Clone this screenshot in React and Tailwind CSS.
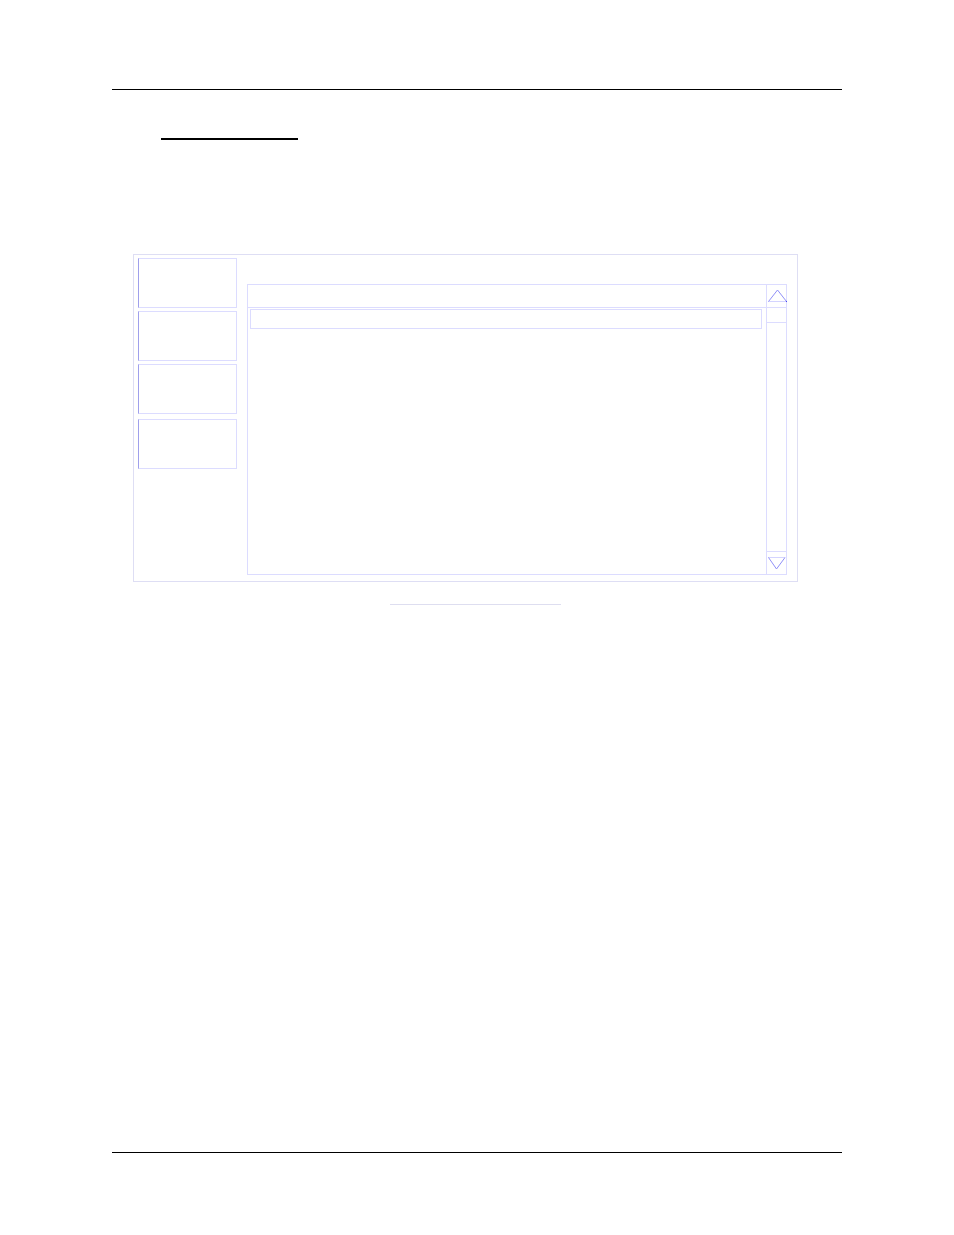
import React from "react";

const actions = ["first", "second", "third", "fourth"];

function ScrollArrow({ direction }) {
  const up = direction === "up";

  return (
    <button
      type="button"
      aria-label={up ? "Scroll up" : "Scroll down"}
      className={`block h-[23px] w-full border-[#dcdcff] ${
        up ? "border-b" : "border-t"
      }`}
    >
      <svg
        viewBox="0 0 19 22"
        fill="none"
        className="block h-[22px] w-[19px] overflow-visible"
      >
        <path
          d={up ? "M1 16.5H19" : "M1 5.5H18"}
          stroke="#d4d4ff"
        />
        <path
          d={up ? "M1.5 16.5L10.5 5L19.5 16.5" : "M1.5 5.5L9.5 17L18 5.5"}
          stroke="#9090f8"
        />
        {up && <path d="M19 16.5H20" stroke="#4646f0" />}
      </svg>
    </button>
  );
}

function ActionColumn() {
  return (
    <div className="grid w-[99px] shrink-0 grid-rows-[53px_53px_55px_50px] content-start">
      {actions.map((action) => (
        <button
          key={action}
          type="button"
          aria-label={`Action ${action}`}
          className="h-[50px] border border-[#dcdcff] border-l-[#a0a0ec]"
        />
      ))}
    </div>
  );
}

function RecordList() {
  return (
    <div className="mt-[26px] flex h-[291px] flex-1 border border-[#dcdcff]">
      <div className="flex-1">
        <div className="h-[23px] border-b border-[#dcdcff]" />
        <div className="mt-px mr-1 ml-0.5 h-5 border border-[#dcdcff]" />
      </div>

      <div className="flex w-5 flex-col border-l border-[#dcdcff]">
        <ScrollArrow direction="up" />
        <div className="h-[15px] border-b border-[#dcdcff]" />
        <div className="flex-1" />
        <ScrollArrow direction="down" />
      </div>
    </div>
  );
}

export default function App() {
  return (
    <div className="flex min-h-screen flex-col bg-white px-[112px] pt-[89px] pb-[82px]">
      <header className="border-t border-black">
        <div className="mt-12 ml-[49px] h-0.5 w-[137px] bg-black" />
      </header>

      <main className="mt-[114px] flex-1">
        <section className="mr-11 ml-[21px] flex gap-[10px] border border-[#dedef4] pt-[3px] pr-[10px] pb-[6px] pl-1">
          <ActionColumn />
          <RecordList />
        </section>
        <div className="mt-[22px] ml-[278px] w-[171px] border-t border-[#dedef0]" />
      </main>

      <footer className="border-t border-black" />
    </div>
  );
}
